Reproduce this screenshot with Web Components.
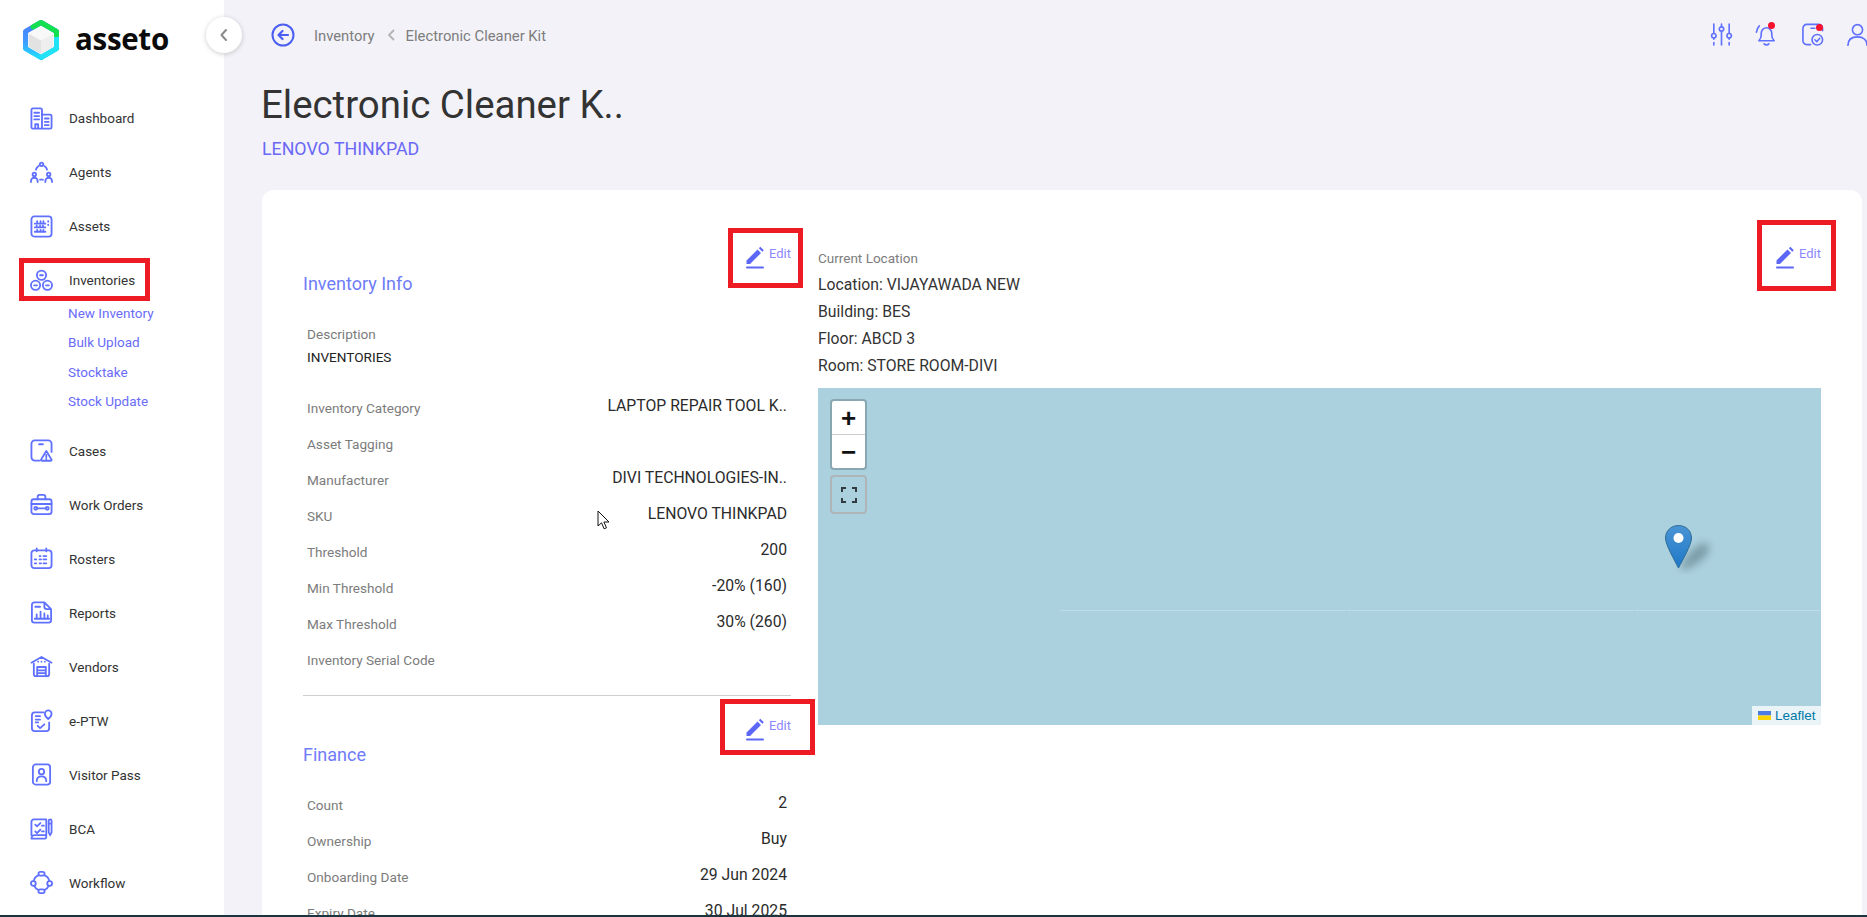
<!DOCTYPE html>
<html lang="en"><head><meta charset="utf-8"><title>Electronic Cleaner Kit</title>
<style>
html,body{margin:0;height:917px;overflow:hidden}
body{display:flex;flex-direction:column;background:#f2f2f8;font-family:Roboto,"Liberation Sans",sans-serif;color:#333}
x-app{flex:1;min-height:0}
.edge{height:2px;background:#1c3440;flex:none}
</style></head><body>
<x-app>
  <x-sidebar slot="side">
    <x-nav-item icon="dashboard">Dashboard</x-nav-item>
    <x-nav-item icon="agents">Agents</x-nav-item>
    <x-nav-item icon="assets">Assets</x-nav-item>
    <x-nav-item icon="inventories">Inventories<x-mark style="left:-50px;top:-12px;width:131px;height:43px"></x-mark></x-nav-item>
    <x-nav-sub><a>New Inventory</a><a>Bulk Upload</a><a>Stocktake</a><a>Stock Update</a></x-nav-sub>
    <x-nav-item icon="cases">Cases</x-nav-item>
    <x-nav-item icon="workorders">Work Orders</x-nav-item>
    <x-nav-item icon="rosters">Rosters</x-nav-item>
    <x-nav-item icon="reports">Reports</x-nav-item>
    <x-nav-item icon="vendors">Vendors</x-nav-item>
    <x-nav-item icon="eptw">e-PTW</x-nav-item>
    <x-nav-item icon="visitor">Visitor Pass</x-nav-item>
    <x-nav-item icon="bca">BCA</x-nav-item>
    <x-nav-item icon="workflow">Workflow</x-nav-item>
  </x-sidebar>
  <x-main slot="main">
    <x-topbar></x-topbar>
    <x-title-block></x-title-block>
    <x-card>
      <div slot="left">
        <x-section heading="Inventory Info" mark="inv">
          <x-desc></x-desc>
          <x-row label="Inventory Category">LAPTOP REPAIR TOOL K..</x-row>
          <x-row label="Asset Tagging"></x-row>
          <x-row label="Manufacturer">DIVI TECHNOLOGIES-IN..</x-row>
          <x-row label="SKU">LENOVO THINKPAD</x-row>
          <x-row label="Threshold">200</x-row>
          <x-row label="Min Threshold">-20% (160)</x-row>
          <x-row label="Max Threshold">30% (260)</x-row>
          <x-row label="Inventory Serial Code"></x-row>
        </x-section>
        <x-divider></x-divider>
        <x-section heading="Finance" mark="fin" class="fin">
          <x-row label="Count">2</x-row>
          <x-row label="Ownership">Buy</x-row>
          <x-row label="Onboarding Date">29 Jun 2024</x-row>
          <x-row label="Expiry Date">30 Jul 2025</x-row>
        </x-section>
      </div>
      <x-location slot="right"></x-location>
    </x-card>
  </x-main>
</x-app>
<div class="edge"></div>
<script>
const C='#6070ff';
const ICONS={
dashboard:'<rect x="1.500" y="1.500" width="11" height="21" rx="1.500"/><path d="M12.500 8h8.500a1.500 1.500 0 0 1 1.500 1.500V21a1.500 1.500 0 0 1-1.500 1.500h-8.500M4.500 6h5M4.500 9.500h5M4.500 13h5M15.500 12h4M15.500 15.500h4M15.500 19h4M5.500 22v-4h3v4"/>',
agents:'<circle cx="12" cy="3.500" r="1.800"/><path d="M6.200 9a7 7 0 0 1 2.800-3.800M17.800 9a7 7 0 0 0-2.800-3.800"/><circle cx="4.500" cy="14" r="1.800"/><circle cx="19.500" cy="14" r="1.800"/><path d="M1 22v-1a3.500 3.500 0 0 1 7 0v1M16 22v-1a3.500 3.500 0 0 1 7 0v1M10.500 19.500h3"/>',
assets:'<rect x="1.500" y="1.500" width="21" height="21" rx="3"/><path d="M5 9h11M5 13h11M5 17.500h11M7.500 6.500V9M11 6.500V9M14 6.500V9M7 11v2M10.500 11v2M13.500 11v2M7.500 15.500v2M11 15.500v2M14 15.500v2M19 6.500v.5M19 10v.5"/>',
inventories:'<circle cx="12" cy="6.500" r="4.800"/><circle cx="5.800" cy="17" r="4.800"/><circle cx="18.200" cy="17" r="4.800"/><path d="M10.500 6.500h3M4.300 17h3M16.700 17h3"/>',
cases:'<path d="M10 22.500H5a3.500 3.500 0 0 1-3.500-3.500V5A3.500 3.500 0 0 1 5 1.500h14A3.500 3.500 0 0 1 22.500 5v8.500M9.500 5.500h4"/><path d="M17 12.500l5.500 9a.8.8 0 0 1-.7 1.200H12.200a.8.8 0 0 1-.7-1.200zM17 16.500v2.500M17 20.800v.2"/>',
workorders:'<rect x="1.500" y="6.500" width="21" height="15.500" rx="2.500"/><path d="M8 6.500V4a2 2 0 0 1 2-2h4a2 2 0 0 1 2 2v2.500M1.500 11.500h21M7.500 16h9"/><circle cx="6" cy="16" r="1.500"/><circle cx="18" cy="16" r="1.500"/>',
rosters:'<rect x="1.500" y="3.500" width="21" height="18.500" rx="3"/><path d="M7 1.500v3M17 1.500v3M10 9.500h1M14 9.500h3M5 13h1.500M10 13h1.500M14 13h3M5 17h1.500M10 17h1.500M14 17h3"/>',
reports:'<path d="M15 1.500H4.500A2.500 2.500 0 0 0 2 4v16a2.500 2.500 0 0 0 2.500 2.500h15A2.500 2.500 0 0 0 22 20V8.500M15 1.500l7 7M15 1.500V6a2.500 2.500 0 0 0 2.500 2.500H22M5.500 6h5M7 18v-4M11 18v-7M15 18v-5M18.500 18v-3M5 18.500h15"/>',
vendors:'<path d="M1.500 8L12 2l10.500 6M4 9v11a2 2 0 0 0 2 2h12a2 2 0 0 0 2-2V9M7.500 12.500h9V22h-9zM7.500 16h9M7.500 19h9M8.500 7h.01M12 7h.01M15.500 7h.01"/>',
eptw:'<path d="M14 3.500H5a3 3 0 0 0-3 3V20a3 3 0 0 0 3 3h12a3 3 0 0 0 3-3v-6"/><path d="M6 7.500h4.500M6 11h4.500M6 14h2.500M8 17.500l2.500 2.500 4.500-4"/><path d="M19 10.500c-3-2.500-3.500-4-3.500-5.500a3.500 3.500 0 0 1 7 0c0 1.500-.5 3-3.500 5.500z"/>',
visitor:'<rect x="3" y="1.500" width="18" height="21" rx="3"/><circle cx="12" cy="9" r="2.800"/><path d="M7 19c0-3.500 2-5 5-5s5 1.500 5 5"/>',
bca:'<path d="M17 19V2.500H4A2.500 2.500 0 0 0 1.500 5v14M5 19a3.500 3.500 0 0 0-3.500 3.500H16a2 2 0 0 0 0-3.500zM5.500 8l1.800 1.800 3.500-3.500M5.500 15l1.800 1.800 3.500-3.500M12.500 9h2M12.500 15h2"/><path d="M19.500 4a1.500 1.500 0 0 1 3 0v12L21 19l-1.500-3zM19.500 7h3"/>',
workflow:'<rect x="8.800" y="1" width="6.400" height="3.800" rx="1.900"/><rect x="8.800" y="19.200" width="6.400" height="3.800" rx="1.900"/><circle cx="3.500" cy="13" r="2.500"/><circle cx="20.500" cy="13" r="2.500"/><path d="M8.800 4.500C6 5.500 4.500 7.500 3.800 10.500M15.200 4.500c2.800 1 4.300 3 5 6M4.500 15.500c.8 2 2.200 3.300 4.300 4.200M19.500 15.500c-.8 2-2.200 3.300-4.300 4.200"/>',
sliders:'<path d="M4 1v10M4 15.500V17M4 20.500V23M12 1v3M12 8.500V23M20 1v10M20 15.500V17M20 20.500V23"/><circle cx="4" cy="13.300" r="2.300"/><circle cx="12" cy="6.300" r="2.300"/><circle cx="20" cy="13.300" r="2.300"/>',
bell:'<path d="M4 18.500c1.500-1.500 2.500-2.500 2.500-6v-2a5.500 5.500 0 0 1 11 0v2c0 3.500 1 4.500 2.500 6zM9.500 21.800c1.200 1.300 3.800 1.300 5 0M1.500 9.500c.3-2.500 1.200-4.500 3-6.500"/>',
casecheck:'<path d="M10 22.500H6a4 4 0 0 1-4-4v-13a4 4 0 0 1 4-4h12.500a4 4 0 0 1 4 4V8M10.500 5.500h4"/><circle cx="17" cy="17.500" r="5.500"/><path d="M14.500 17.500l2 2 3-3.500"/>',
user:'<circle cx="12" cy="7" r="5.300"/><path d="M2 23.500c0-6 4-9 10-9s10 3 10 9"/>'
};
function def(name,html){
  customElements.define(name,class extends HTMLElement{
    constructor(){super();this.attachShadow({mode:'open'});}
    connectedCallback(){ if(this.shadowRoot.childNodes.length) return; this.shadowRoot.innerHTML=typeof html==='function'?html(this):html; }
  });
}
def('x-icon',el=>{
  const n=el.getAttribute('name'),s=el.getAttribute('size')||23,w=el.getAttribute('sw')||1.900;
  return `<style>:host{display:inline-flex;flex:none}svg{display:block}</style><svg width="${s}" height="${s}" viewBox="0 0 24 24" fill="none" stroke="${C}" stroke-width="${w}" stroke-linecap="round" stroke-linejoin="round">${ICONS[n]}</svg>`;
});
def('x-mark',`<style>:host{position:absolute;display:block;box-sizing:border-box;border:5px solid #ed1c24;pointer-events:none}</style>`);
def('x-app',`<style>:host{display:flex;height:100%;overflow:hidden}</style><slot name="side"></slot><slot name="main"></slot>`);
def('x-logo',`<style>
:host{display:flex;align-items:center;height:91px;padding:0 0 11px 20px;box-sizing:border-box;gap:13px}
.t{font:700 29.500px/1 "Open Sans","Noto Sans",sans-serif;color:#0b0b0b;letter-spacing:-.3px;margin-top:-3px}
</style>
<svg width="42" height="44" viewBox="0 0 42 44">
<defs><linearGradient id="g" x1="0" y1="0" x2="0" y2="1"><stop offset="0" stop-color="#4a7dff"/><stop offset=".55" stop-color="#3f9bff"/><stop offset="1" stop-color="#1fdcff"/></linearGradient></defs>
<path d="M21 4.500 L36.500 13.500 V30.500 L21 39.500 L5.500 30.500 V13.500 Z" fill="none" stroke="url(#g)" stroke-width="5" stroke-linejoin="round"/>
<path d="M13 9 L21 4.500 L36.500 13.500 V19" fill="none" stroke="#12e04e" stroke-width="5" stroke-linejoin="round" stroke-linecap="round"/>
<path d="M36.500 19V30.500L21 39.500" fill="none" stroke="#22e3f5" stroke-width="5" stroke-linejoin="round"/>
<path d="M21 8.500 L33.500 15.500 L21 22.500 L8.500 15.500 Z" fill="#f8f8f8"/><path d="M8.500 15.500 L21 22.500 V36 L8.500 29 Z" fill="#e2e2e2"/><path d="M33.500 15.500 L21 22.500 V36 L33.500 29 Z" fill="#eeeeee"/>
</svg><span class="t">asseto</span>`);
def('x-sidebar',`<style>
:host{display:block;position:relative;width:224px;flex:none;background:#fff;height:100%}
nav{display:flex;flex-direction:column}
.tog{position:absolute;left:206px;top:17px;width:36px;height:36px;border-radius:50%;background:#fff;box-shadow:0 1px 5px rgba(0,0,0,.2);display:flex;align-items:center;justify-content:center;z-index:2}
</style><x-logo></x-logo><div class="tog"><svg width="12" height="14" viewBox="0 0 12 14" fill="none" stroke="#8a8a8a" stroke-width="2" stroke-linecap="round" stroke-linejoin="round"><path d="M8 2L3.500 7 8 12"/></svg></div><nav><slot></slot></nav>`);
def('x-nav-item',el=>`<style>
:host{display:flex;align-items:center;height:54px;padding-left:30px;gap:16px;font:13.500px/20px Roboto,sans-serif;color:#333}
.l{position:relative}
</style><x-icon name="${el.getAttribute('icon')}"></x-icon><span class="l"><slot></slot></span>`);
def('x-nav-sub',`<style>
:host{display:flex;flex-direction:column;margin:-8px 0 7px;padding-left:68px;font:13.500px/29.400px Roboto,sans-serif;color:#6a6cf8}
::slotted(a){display:block}
</style><slot></slot>`);
def('x-main',`<style>:host{display:flex;flex-direction:column;flex:1;min-width:0;padding:0 5px 0 38px;height:100%;overflow:hidden}</style><slot></slot>`);
def('x-topbar',`<style>
:host{display:flex;align-items:center;height:70px;flex:none;font:14.800px Roboto,sans-serif;color:#7d7d7d}
.back{margin:0 19px 0 9px;display:block}
.sep{margin:0 10px 0 12px;display:block}
.t{margin-top:2px}
.r{margin-left:auto;display:flex;align-items:center;gap:22.500px;position:relative;margin:2px -7px 0 auto}
.i{position:relative;display:block}
.d{position:absolute;width:7px;height:7px;border-radius:50%;background:#f5132f}
</style>
<svg class="back" width="24" height="24" viewBox="0 0 24 24" fill="none" stroke="#4a5ff0" stroke-linecap="round" stroke-linejoin="round"><circle cx="12" cy="12" r="10.500" stroke-width="2"/><path d="M17 12H8M11.500 8L7.500 12l4 4" stroke-width="2.200"/></svg>
<span class="t">Inventory</span>
<svg class="sep" width="9" height="12" viewBox="0 0 9 12" fill="none" stroke="#b4b4b4" stroke-width="1.800" stroke-linecap="round" stroke-linejoin="round"><path d="M6.500 1.500L2 6l4.500 4.500"/></svg>
<span class="t">Electronic Cleaner Kit</span>
<div class="r">
<span class="i"><x-icon name="sliders" size="23" sw="1.700"></x-icon></span>
<span class="i"><x-icon name="bell" size="23" sw="1.700"></x-icon><span class="d" style="left:13px;top:-1px"></span></span>
<span class="i"><x-icon name="casecheck" size="23" sw="1.700"></x-icon><span class="d" style="left:15px;top:1px"></span></span>
<span class="i"><x-icon name="user" size="23" sw="1.700"></x-icon></span>
</div>`);
def('x-title-block',`<style>
:host{display:block;flex:none;height:120px;padding-top:13px;box-sizing:border-box;margin-left:-1px}
h1{margin:0;font:400 38.400px/44px Roboto,sans-serif;color:#333}
p{margin:12px 0 0 1px;font:17.800px/20px Roboto,sans-serif;color:#6a68f5}
</style><h1>Electronic Cleaner K..</h1><p>LENOVO THINKPAD</p>`);
def('x-card',`<style>
:host{display:flex;flex:1;box-sizing:border-box;background:#fff;border-radius:12px 12px 0 0;padding:56px 41px 0;gap:27px;min-height:760px}
.l{width:488px;flex:none}.r{flex:1;min-width:0}
</style><div class="l"><slot name="left"></slot></div><div class="r"><slot name="right"></slot></div>`);
def('x-edit',`<style>
:host{display:flex;justify-content:flex-end;align-items:flex-start;height:22px;position:relative;font:13px/16px Roboto,sans-serif;color:#8d88ff;gap:4px}
svg{display:block}
</style><svg width="20" height="23" viewBox="0 0 19 23"><path d="M1 14.500L12 3.500l3.500 3.500L4.500 18H1zM13.300 2.200l1.500-1.500 3.500 3.500-1.500 1.500z" fill="#5c68f5"/><rect x="0.500" y="20.500" width="18" height="2" rx="1" fill="#5c68f5"/></svg><span>Edit</span><slot></slot>`);
def('x-section',el=>`<style>
:host{display:block}
h2{margin:5px 0 0;font:400 18px/22px Roboto,sans-serif;color:#6f7cf7}
.b{margin-top:29px}
:host(.fin) h2{margin-top:4px}
:host(.fin) .b{margin-top:21px}
</style>
<x-edit>${el.getAttribute('mark')==='inv'?'<x-mark style="right:-12px;top:-18px;width:75px;height:60px"></x-mark>':'<x-mark style="right:-24px;top:-19px;width:95px;height:56px"></x-mark>'}</x-edit>
<h2>${el.getAttribute('heading')}</h2><div class="b"><slot></slot></div>`);
def('x-desc',`<style>
:host{display:block;padding-left:4px;margin-bottom:23px;font:13.600px/20px Roboto,sans-serif}
.a{color:#7c7c7c;margin-bottom:3px}.v{color:#222}
</style><div class="a">Description</div><div class="v">INVENTORIES</div>`);
def('x-row',el=>`<style>
:host{display:flex;justify-content:space-between;align-items:flex-start;height:36px;padding:0 4px 0 4px}
.a{font:13.600px/36px Roboto,sans-serif;color:#7c7c7c}
.v{font:15.750px/32px Roboto,sans-serif;color:#2b2b2b;text-align:right}
</style><span class="a">${el.getAttribute('label')}</span><span class="v"><slot></slot></span>`);
def('x-divider',`<style>:host{display:block;height:1px;background:#cfcfcf;margin:17px 0 22px}</style>`);
def('x-location',`<style>
:host{display:block;font:15.750px/27px Roboto,sans-serif;color:#333}
.h{display:flex;justify-content:space-between;align-items:flex-start}
.c{font:13.500px/20px Roboto,sans-serif;color:#7c7c7c;margin:2px 0 2.500px}
x-map{margin-top:9.500px}
</style><div class="h"><div><div class="c">Current Location</div><div>Location: VIJAYAWADA NEW</div><div>Building: BES</div><div>Floor: ABCD 3</div><div>Room: STORE ROOM-DIVI</div></div>
<x-edit style="width:46px"><x-mark style="left:-18px;top:-26px;width:79px;height:71px"></x-mark></x-edit></div><x-map></x-map>`);
def('x-map',`<style>
:host{display:block;position:relative;height:337px;background:#acd1de;overflow:hidden}
.ctl{position:absolute;left:12px;width:37px;box-sizing:border-box;border:2px solid rgba(0,0,0,.2);border-radius:4px;background:#fff;background-clip:padding-box}
.z{top:11px;height:71px}
.z div{height:33px;display:flex;align-items:center;justify-content:center;font:700 26px/1 "Liberation Sans",sans-serif;color:#111}
.z div+div{border-top:1px solid #ccc;height:34px}
.fs{top:87px;height:39px;border-color:#aeb4b8;display:flex;align-items:center;justify-content:center;background:#acd1de}
.h{position:absolute;left:242px;right:0;top:222px;height:1px;background:#bcdde9}
.v{position:absolute;top:222px;bottom:0;width:1px;background:#a9d0d6}
.pin{position:absolute;left:846px;top:136px}
.attr{position:absolute;right:0;bottom:0;height:19px;width:69px;box-sizing:border-box;background:rgba(255,255,255,.75);font:13.500px/19px "Liberation Sans",sans-serif;color:#0078a8;display:flex;align-items:center;gap:4px;padding-left:6px;white-space:nowrap}
</style>
<div class="h"></div><div class="v" style="left:528px"></div><div class="v" style="left:816px"></div>
<div class="ctl z"><div>+</div><div>&#8722;</div></div>
<div class="ctl fs"><svg width="16" height="16" viewBox="0 0 16 16" fill="none" stroke="#333a40" stroke-width="2"><path d="M1 5V1h4M11 1h4v4M15 11v4h-4M5 15H1v-4"/></svg></div>
<svg class="pin" width="52" height="50" viewBox="0 0 52 50">
<defs><linearGradient id="p" x1="0" y1="0" x2="0" y2="1"><stop offset="0" stop-color="#4a94d4"/><stop offset="1" stop-color="#1f78c8"/></linearGradient><filter id="b" x="-50%" y="-50%" width="200%" height="200%"><feGaussianBlur stdDeviation="4"/></filter></defs>
<path d="M15 45 L27 27 L40 18 L46 24 L40 34 L24 45 Z" fill="#3a5560" opacity=".45" filter="url(#b)"/>
<path d="M14.500 1.500C7 1.500 1.500 7 1.500 14c0 7 9 22 13 30 4-8 13-23 13-30 0-7-5.500-12.500-13-12.500z" fill="url(#p)" stroke="#2e6c97"/>
<circle cx="14.500" cy="14" r="5" fill="#fff"/></svg>
<div class="attr"><svg width="13" height="9" viewBox="0 0 13 9" style="display:block;flex:none"><rect width="13" height="4.500" fill="#4c7be1"/><rect y="4.500" width="13" height="4.500" fill="#ffd500"/></svg><span>Leaflet</span></div>`);
def('x-cursor',`<style>:host{position:absolute;left:597px;top:510px;display:block;pointer-events:none}</style><svg width="13" height="20" viewBox="0 0 13 20" style="display:block"><path d="M1 1v15l3.500-3.200 2.600 6 2.400-1-2.600-5.800H12z" fill="#fff" stroke="#111" stroke-width="1"/></svg>`);
document.body.appendChild(document.createElement('x-cursor'));
</script>
</body></html>
